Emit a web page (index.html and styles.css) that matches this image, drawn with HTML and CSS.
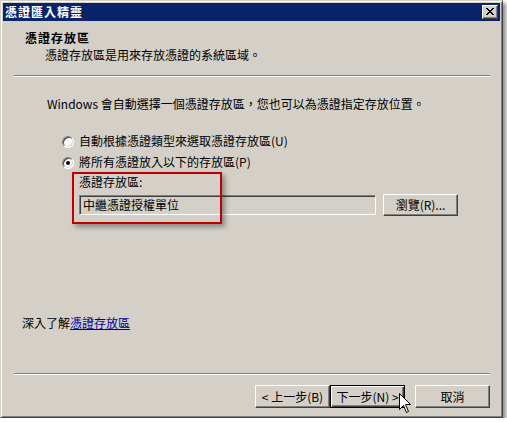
FILE: index.html
```html
<!DOCTYPE html>
<html lang="zh-Hant">
<head>
<meta charset="utf-8">
<title>憑證匯入精靈</title>
<link rel="stylesheet" href="styles.css">
</head>
<body>
<div class="window">
  <div class="titlebar">
    <span class="title">憑證匯入精靈</span>
    <span class="close"><svg width="8" height="7" viewBox="0 0 8 7" shape-rendering="crispEdges"><path fill="#000" d="M0 0h2v1h-2z M6 0h2v1h-2z M1 1h2v1h-2z M5 1h2v1h-2z M2 2h4v1h-4z M3 3h2v1h-2z M2 4h4v1h-4z M1 5h2v1h-2z M5 5h2v1h-2z M0 6h2v1h-2z M6 6h2v1h-2z"/></svg></span>
  </div>
  <div class="header">
    <div class="h-title">憑證存放區</div>
    <div class="h-sub">憑證存放區是用來存放憑證的系統區域。</div>
  </div>
  <div class="sep"></div>
  <div class="body">
    <p class="intro">Windows 會自動選擇一個憑證存放區，您也可以為憑證指定存放位置。</p>
    <div class="radios">
      <div class="radio"><span class="rb"></span><span>自動根據憑證類型來選取憑證存放區(U)</span></div>
      <div class="radio"><span class="rb checked"></span><span>將所有憑證放入以下的存放區(P)</span></div>
    </div>
    <div class="store">
      <div class="store-label">憑證存放區:</div>
      <div class="store-row">
        <div class="field">中繼憑證授權單位</div>
        <span class="btn browse">瀏覽(R)...</span>
      </div>
      <div class="highlight"></div>
    </div>
  </div>
  <div class="learn">深入了解<a class="link">憑證存放區</a></div>
  <div class="sep sep-bottom"></div>
  <div class="footer">
    <span class="btn">&lt; 上一步(B)</span>
    <span class="btn default">下一步(N) &gt;</span>
    <span class="btn cancel">取消</span>
  </div>
  <svg class="cursor" width="13" height="21" viewBox="0 0 13 21"><path d="M0.5 0.5V16.5L4.5 12.5L7.5 19.5L9.5 18.5L6.5 11.5H11.5Z" fill="#fff" stroke="#000" stroke-linejoin="miter"/></svg>
</div>
</body>
</html>
```
FILE: styles.css
```css
* {
  box-sizing: border-box;
  margin: 0;
  padding: 0;
}

html, body {
  background: #fff;
}

body {
  margin: 0;
  font-family: "Noto Sans CJK TC", "Noto Sans", sans-serif;
  font-size: 12px;
  line-height: 14px;
  color: #000;
}

.window {
  position: relative;
  width: 503px;
  height: 418px;
  background: #d4d0c8;
  border: 1px solid;
  border-color: #d4d0c8 #404040 #404040 #d4d0c8;
  padding: 2px;
  box-shadow: inset 1px 1px #fff, inset -1px -1px #808080, 3px 3px 4px rgba(0, 0, 0, 0.45);
  display: flex;
  flex-direction: column;
}

.titlebar {
  height: 18px;
  background: #0a246a;
  display: flex;
  align-items: center;
  justify-content: space-between;
  padding: 0 2px 0 2px;
}

.title {
  color: #fff;
  font-weight: bold;
  letter-spacing: 1px;
  line-height: 16px;
}

.close {
  width: 16px;
  height: 14px;
  background: #d4d0c8;
  border: 1px solid;
  border-color: #fff #404040 #404040 #fff;
  box-shadow: inset -1px -1px #808080;
  display: flex;
  align-items: center;
  justify-content: center;
  padding: 0 1px 1px 0;
}

.close svg {
  display: block;
}

.header {
  padding: 10px 0 0 22px;
}

.h-title {
  font-weight: bold;
  letter-spacing: 1px;
}

.h-sub {
  margin: 3px 0 0 20px;
}

.sep {
  height: 2px;
  border-top: 1px solid #808080;
  border-bottom: 1px solid #fff;
  margin: 13px 10px 0 11px;
}

.body {
  padding-left: 44px;
}

.intro {
  margin-top: 20px;
}

.radios {
  margin: 23px 0 0 15px;
  display: flex;
  flex-direction: column;
  gap: 7px;
}

.radio {
  display: flex;
  align-items: flex-start;
  gap: 5px;
  height: 14px;
}

.rb {
  position: relative;
  flex: none;
  width: 12px;
  height: 12px;
  margin-top: 2px;
  border-radius: 50%;
  background: #fff;
  border: 1px solid;
  border-color: #808080 #fff #fff #808080;
  box-shadow: inset 1px 1px #404040, inset -1px -1px #d4d0c8;
}

.rb.checked::after {
  content: "";
  position: absolute;
  left: 3px;
  top: 3px;
  width: 4px;
  height: 4px;
  border-radius: 50%;
  background: #000;
}

.store {
  position: relative;
  margin: 6px 0 0 32px;
}

.store-row {
  display: flex;
  align-items: center;
  gap: 7px;
  margin-top: 5px;
  height: 22px;
}

.field {
  width: 297px;
  height: 20px;
  background: #d4d0c8;
  border: 1px solid;
  border-color: #808080 #fff #fff #808080;
  box-shadow: inset 1px 1px #404040, inset -1px -1px #d4d0c8;
  padding-left: 3px;
  line-height: 17px;
}

.btn {
  display: flex;
  align-items: center;
  justify-content: center;
  width: 75px;
  height: 23px;
  background: #d4d0c8;
  border: 1px solid;
  border-color: #fff #404040 #404040 #fff;
  box-shadow: inset -1px -1px #808080;
  white-space: nowrap;
}

.browse {
  height: 22px;
}

.highlight {
  position: absolute;
  left: -7px;
  top: -3px;
  width: 150px;
  height: 52px;
  border: 2px solid #c00000;
  box-shadow: 3px 3px 5px rgba(0, 0, 0, 0.35);
}

.learn {
  margin-top: auto;
  padding-left: 19px;
}

.link {
  color: #0000a0;
  text-decoration: underline;
}

.sep-bottom {
  margin-top: 43px;
}

.footer {
  margin-top: 10px;
  padding: 0 10px 7px 0;
  display: flex;
  justify-content: flex-end;
}

.btn.default {
  border-color: #000;
  box-shadow: inset 1px 1px #fff, inset -1px -1px #404040, inset -2px -2px #808080;
}

.btn.cancel {
  margin-left: 10px;
}

.cursor {
  position: absolute;
  left: 398px;
  top: 392px;
}
```
